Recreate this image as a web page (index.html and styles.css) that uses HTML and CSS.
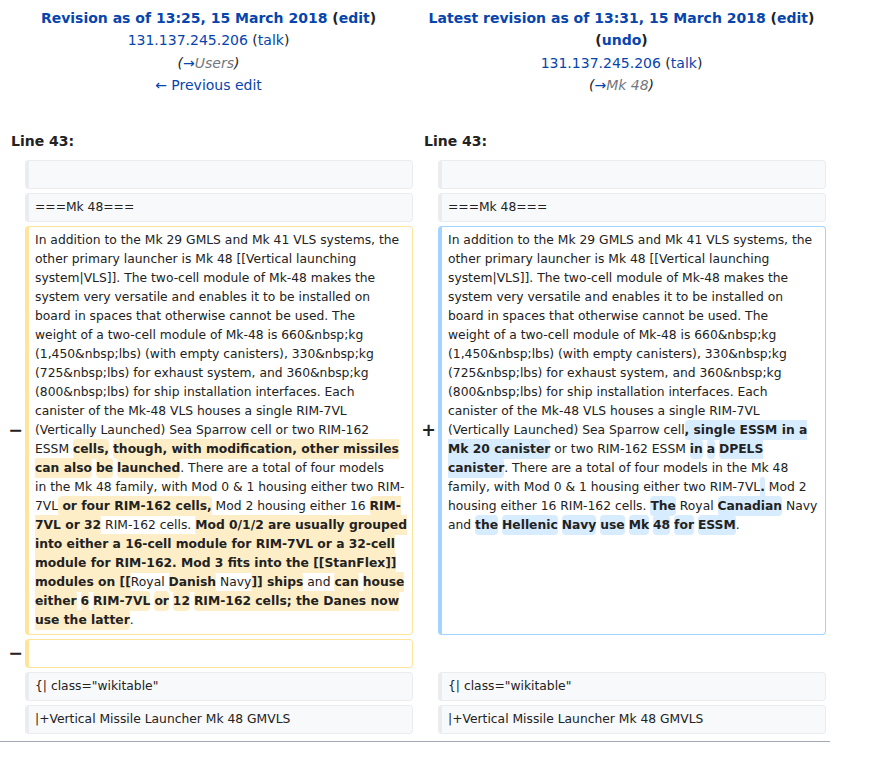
FILE: index.html
```html
<!DOCTYPE html>
<html lang="en">
<head>
<meta charset="utf-8">
<title>Diff</title>
<link rel="stylesheet" href="styles.css">
</head>
<body>
<div class="diff">
  <div class="title">
    <div class="t1"><a href="#">Revision as of 13:25, 15 March 2018</a> (<a href="#">edit</a>)</div>
    <div><a href="#">131.137.245.206</a> (<a href="#">talk</a>)</div>
    <div class="comment">(<a href="#">→</a><span class="auto">Users</span>)</div>
    <div><a href="#">← Previous edit</a></div>
  </div>
  <div class="title">
    <div class="t1"><a href="#">Latest revision as of 13:31, 15 March 2018</a> (<a href="#">edit</a>) (<a href="#">undo</a>)</div>
    <div><a href="#">131.137.245.206</a> (<a href="#">talk</a>)</div>
    <div class="comment">(<a href="#">→</a><span class="auto">Mk 48</span>)</div>
    <div>&nbsp;</div>
  </div>

  <div class="lineno">Line 43:</div>
  <div class="lineno">Line 43:</div>

  <div class="marker"></div>
  <div class="line ctx"><br></div>
  <div class="marker"></div>
  <div class="line ctx"><br></div>

  <div class="marker"></div>
  <div class="line ctx">===Mk 48===</div>
  <div class="marker"></div>
  <div class="line ctx">===Mk 48===</div>

  <div class="marker">−</div>
  <div class="line del">In addition to the Mk 29 GMLS and Mk 41 VLS systems, the<br>other primary launcher is Mk 48 [[Vertical launching<br>system|VLS]]. The two-cell module of Mk-48 makes the<br>system very versatile and enables it to be installed on<br>board in spaces that otherwise cannot be used. The<br>weight of a two-cell module of Mk-48 is 660&amp;nbsp;kg<br>(1,450&amp;nbsp;lbs) (with empty canisters), 330&amp;nbsp;kg<br>(725&amp;nbsp;lbs) for exhaust system, and 360&amp;nbsp;kg<br>(800&amp;nbsp;lbs) for ship installation interfaces. Each<br>canister of the Mk-48 VLS houses a single RIM-7VL<br>(Vertically Launched) Sea Sparrow cell or two RIM-162<br>ESSM <span class="chg">cells,</span> <span class="chg">though, with modification, other missiles<br>can also</span> <span class="chg">be</span> <span class="chg">launched</span>. There are a total of four models<br>in the Mk 48 family, with Mod 0 &amp; 1 housing either two RIM-<br>7VL<span class="chg"> or four RIM-162 cells,</span> Mod 2 housing either 16 <span class="chg">RIM-<br>7VL or 32</span> RIM-162 cells. <span class="chg">Mod 0/1/2 are usually grouped<br>into either a 16-cell module for RIM-7VL or a 32-cell<br>module for RIM-162. Mod 3 fits into the [[StanFlex]]<br>modules on [[</span>Royal <span class="chg">Danish</span> Navy<span class="chg">]] ships</span> and <span class="chg">can</span> <span class="chg">house<br>either</span> <span class="chg">6</span> <span class="chg">RIM-7VL</span> <span class="chg">or</span> <span class="chg">12</span> <span class="chg">RIM-162 cells; the Danes now<br>use the latter</span>.</div>
  <div class="marker">+</div>
  <div class="line add">In addition to the Mk 29 GMLS and Mk 41 VLS systems, the<br>other primary launcher is Mk 48 [[Vertical launching<br>system|VLS]]. The two-cell module of Mk-48 makes the<br>system very versatile and enables it to be installed on<br>board in spaces that otherwise cannot be used. The<br>weight of a two-cell module of Mk-48 is 660&amp;nbsp;kg<br>(1,450&amp;nbsp;lbs) (with empty canisters), 330&amp;nbsp;kg<br>(725&amp;nbsp;lbs) for exhaust system, and 360&amp;nbsp;kg<br>(800&amp;nbsp;lbs) for ship installation interfaces. Each<br>canister of the Mk-48 VLS houses a single RIM-7VL<br>(Vertically Launched) Sea Sparrow cell<span class="chg">, single ESSM in a<br>Mk 20 canister</span> or two RIM-162 ESSM <span class="chg">in</span> <span class="chg">a</span> <span class="chg">DPELS<br>canister</span>. There are a total of four models in the Mk 48<br>family, with Mod 0 &amp; 1 housing either two RIM-7VL<span class="chg">.</span> Mod 2<br>housing either 16 RIM-162 cells. <span class="chg">The</span> Royal <span class="chg">Canadian</span> Navy<br>and <span class="chg">the</span> <span class="chg">Hellenic</span> <span class="chg">Navy</span> <span class="chg">use</span> <span class="chg">Mk</span> <span class="chg">48</span> <span class="chg">for</span> <span class="chg">ESSM</span>.</div>

  <div class="marker">−</div>
  <div class="line del"><br></div>
  <div class="empty"></div>

  <div class="marker"></div>
  <div class="line ctx">{| class="wikitable"</div>
  <div class="marker"></div>
  <div class="line ctx">{| class="wikitable"</div>

  <div class="marker"></div>
  <div class="line ctx">|+Vertical Missile Launcher Mk 48 GMVLS</div>
  <div class="marker"></div>
  <div class="line ctx">|+Vertical Missile Launcher Mk 48 GMVLS</div>
</div>
</body>
</html>
```

FILE: styles.css
```css
html, body {
  margin: 0;
  padding: 0;
  background: #fff;
}

body {
  font-family: "DejaVu Sans", "Noto Sans", sans-serif;
  font-size: 14px;
  line-height: 1.6;
  color: #222;
}

a {
  color: #0645ad;
  text-decoration: none;
}

.diff {
  display: grid;
  grid-template-columns: 17px 388px 17px 388px;
  gap: 4px;
  padding: 4px 4px 7px;
  width: max-content;
  border-bottom: 1px solid #a2a9b1;
}

.title {
  grid-column: span 2;
  text-align: center;
  padding: 3px 7px;
}

.t1 {
  font-weight: bold;
}

.comment {
  font-style: italic;
}

.comment .auto {
  color: #72777d;
}

.lineno {
  grid-column: span 2;
  font-weight: bold;
  padding: 4px 7px;
}

.marker {
  font-weight: bold;
  font-size: 17.5px;
  line-height: 1.2;
  text-align: right;
  align-self: center;
  margin-right: -2px;
}

.line {
  font-size: 12.32px;
  line-height: 19px;
  border: 1px solid;
  border-left-width: 4px;
  border-radius: 4px;
  padding: 4px 6px;
  white-space: nowrap;
  overflow: hidden;
}

.ctx {
  background: #f8f9fa;
  border-color: #eaecf0;
}

.del {
  background: #fff;
  border-color: #ffe49c;
}

.add {
  background: #fff;
  border-color: #a3d3ff;
}

.empty {
  grid-column: span 2;
}

.chg {
  font-weight: bold;
  border-radius: 4px;
  padding: 3px 0;
}

.del .chg {
  background: #feeec8;
}

.add .chg {
  background: #d8ecff;
}
```
